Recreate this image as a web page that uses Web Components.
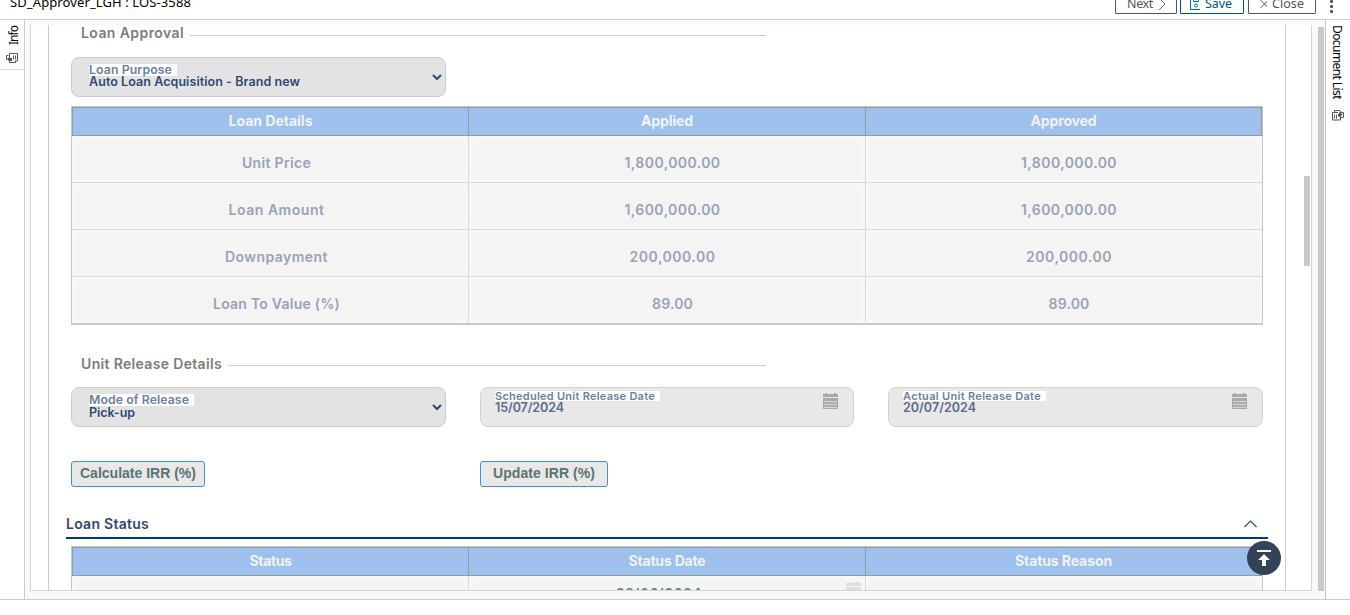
<!DOCTYPE html>
<html lang="en"><head><meta charset="utf-8"><title>Loan</title>
<style>html,body{margin:0;height:100%;overflow:hidden;background:#fff}</style></head><body>
<loan-app></loan-app>
<script>
const define=(name,html,setup)=>customElements.define(name,class extends HTMLElement{
  connectedCallback(){
    if(this.shadowRoot)return;
    const a=k=>this.getAttribute(k)||'';
    this.attachShadow({mode:'open'}).innerHTML=typeof html==='function'?html(a):html;
    if(setup)setup(this);
  }
});

/* A label whose letter-spacing is adjusted to a requested width. */
define('fit-text','<style>:host{display:block;white-space:nowrap;width:max-content}span{display:inline-block}</style><span><slot></slot></span>',el=>{
  const s=el.shadowRoot.querySelector('span'),w=+el.getAttribute('w'),n=el.textContent.length;
  if(w)s.style.letterSpacing=((w-s.getBoundingClientRect().width)/n)+'px';
});

define('calendar-icon','<style>:host{display:block;width:15px;height:16px}svg{display:block}</style><svg width="15" height="16" shape-rendering="crispEdges"><path d="M0 1h2V0h2v1h7V0h2v1h2v3H0zM0 5h15v11H0z" fill="#a8a8a8"/><path d="M1 8.5h13M1 11.5h13M1 14.5h13" stroke="#ddd" stroke-dasharray="2 1"/><path d="M3.5 8v7M6.5 8v7M9.5 8v7M12.5 8v7" stroke="#cdcdcd" stroke-dasharray="1 1"/></svg>');

define('tool-button',a=>`<style>:host{display:flex;box-sizing:border-box;height:17px;border:1px solid #555;border-radius:1px;color:#555;font:12.5px/17px "Noto Sans",sans-serif;padding:0 11px;gap:5px;align-items:center;width:${a('width')}px}:host([primary]){border-color:#00508c;color:#00508c;padding-left:9px}svg{flex:none}</style><slot></slot>`);

define('top-bar',`<style>:host{display:flex;height:19px;border-bottom:1px solid #ccc;overflow:hidden;justify-content:space-between;align-items:flex-start;font:13px/18px "Noto Sans",sans-serif;color:#000}
.title{margin:-7px 0 0 10px}.actions{display:flex;gap:3px;margin-top:-3px}.close{margin-left:1px}.dots{display:flex;flex-direction:column;gap:2px;margin:3px 17px 0 11px}.dots i{width:3px;height:3px;background:#555;border-radius:1px}fit-text{line-height:18px;margin-top:-4px}.actions svg{margin-top:-3px}</style>
<fit-text class="title" w="181">SD_Approver_LGH : LOS-3588</fit-text>
<div class="actions"><tool-button width="62"><fit-text w="26">Next</fit-text><svg width="9" height="13" fill="none" stroke="#666"><path d="M1 0l6 6-6 6"/></svg></tool-button>
<tool-button primary width="64"><svg width="12" height="12" fill="none" stroke="#0070c0" stroke-width="1"><path d="M.5 0v11.500h11V0M3.500 0v3.500h5V0"/><circle cx="6" cy="7.500" r="1.500"/></svg><fit-text w="27">Save</fit-text></tool-button>
<tool-button class="close" width="68"><svg width="9" height="12" fill="none" stroke="#555"><path d="M.5 2l8 8M8.5 2l-8 8"/></svg><fit-text w="32">Close</fit-text></tool-button>
<div class="dots"><i></i><i></i><i></i></div></div>`);

const docs={
left:`<svg width="12" height="10" fill="none" stroke="#555"><path d="M3.500 6V.5h8v7.500h-2.500M2.500 2.500h-2v4h1M9.500 8v1.500h-6.500M7.500 2.500v4M9.500 2.500v4"/><path d="M1 6l3-2.500V5h2v3H4v1.500z" fill="#555" stroke="none"/></svg>`,
right:`<svg width="12" height="11" fill="none" stroke="#555"><path d="M2.500 2V.5h5l2 2M6 2.500H.5v7.500h8V8M2.500 4.500v4M4.500 4.500v4M9.500 2.500h2v5H8"/><path d="M6 4.500l2-2.500h1.500v2h1l-2.500 3.500-2-1.500z" fill="#555" stroke="none"/></svg>`};
define('side-tab',a=>`<style>:host{display:flex;box-sizing:border-box;flex-direction:column;align-items:center;width:25px;background:#fff;font:12px/16px "Noto Sans",sans-serif;color:#000;border-right:1px solid #ccc}
:host([side=right]){border:0;border-left:1px solid #c4c4c4}
.tab{box-sizing:border-box;width:100%;height:50px;border-bottom:1px solid #ddd;display:flex;flex-direction:column;align-items:center;padding-top:6px;gap:8px}
:host([side=right]) .tab{height:auto;border:0;gap:11px;padding:5px 1px 0 0}
.v{writing-mode:vertical-rl;display:block;margin-left:4px}:host([side=right]) .v{margin:0 2px 0 0}:host([side=left]) .v{transform:rotate(180deg)}svg{display:block}</style><div class="tab"><span class="v"><slot></slot></span>${docs[a('side')]}</div>`,
el=>{const v=el.shadowRoot.querySelector('.v'),w=+el.getAttribute('length');v.style.letterSpacing=((w-v.getBoundingClientRect().height)/el.textContent.length)+'px';v.style.height=w+'px'});

define('section-rule',`<style>:host{display:flex;align-items:center;width:685px;height:20px;gap:6px;margin-left:10px;font:600 14px/20px Inter,sans-serif;color:#7c7c7c}i{flex:1;height:1px;background:#ccc;margin-top:3px}</style><slot></slot><i></i>`);

define('form-field',a=>`<style>:host{display:block;box-sizing:border-box;height:40px;border:1px solid #ccc;border-radius:8px;background:#e3e3e3;font-family:Inter,sans-serif;font-weight:600;color:#2f4a75}
:host([date]){background:#e8e8e8;border-color:#d2d2d2;color:#5a6a8a}
.row{display:flex;justify-content:space-between;height:100%}.copy{padding:6px 0 0 17px}.label{background:#fff;color:#6c7f9e;font-size:12.3px;line-height:12px;height:12px;padding-right:5px}.value{font-size:12.5px;line-height:13px}
:host(.purpose) .value{line-height:12px}
:host([date]) .copy{padding:3px 0 0 14px}:host([date]) .label{font-size:11px;line-height:10px;height:10px}:host([date]) .value{line-height:12px}:host([date]) .value{margin-top:1px}
svg{display:block;margin:16px 3px 0}calendar-icon{margin:5px 15px 0}</style>
<div class="row"><div class="copy"><fit-text class="label" w="${a('lw')}">${a('label')}</fit-text><fit-text class="value" w="${a('vw')}">${a('value')}</fit-text></div>
${a('date')?'<calendar-icon></calendar-icon>':'<svg width="10" height="7" fill="none" stroke="#2f4a75" stroke-width="2"><path d="M1 1l4 4 4-4"/></svg>'}</div>`);

define('data-table',a=>{
 const heads=a('heads').split('|').map(x=>x.split(':')),rows=a('rows').split(';').map(r=>r.split('|').map(x=>x.split(':')));
 return `<style>:host{display:block;box-sizing:border-box;border:1px solid #c6c6c6;width:1192px}
.head,.row{display:grid;grid-template-columns:397px 397px 396px;font-family:Inter,sans-serif;font-weight:700;font-size:14px;line-height:16px}
.head{box-sizing:border-box;height:29px;background:#9dc0ed;border:1px solid #929aa5;color:#f1f2f4;grid-template-columns:396px 397px 395px}
.head div{display:flex;justify-content:center;align-items:center;border-right:1px solid #929aa5}.head div:last-child,.cell:last-child{border-right:0}
.row{height:47px;color:#98a3b8;font-weight:600;background:#f7f7f7}.cell{display:flex;box-sizing:border-box;border-right:1px solid #dadada;border-bottom:1px solid #dadada;padding:3px 3px 2px}
.row:last-child .cell{border-bottom-color:#ccc}.pill{flex:1;display:flex;justify-content:center;align-items:center;background:#f4f4f4;border-radius:8px;padding:7px 0 0 11px}.cell:first-child .pill{padding-left:13px}.cell:last-child .pill{padding-left:10px}
.head fit-text{margin-top:-1px}.date{color:#627b76}.date .pill{position:relative;align-items:flex-start;padding:5px 15px 0 0}.date fit-text{font:600 13.5px/17px "Liberation Sans"}.date calendar-icon{position:absolute;right:1px;top:3px;opacity:.28}</style>
<div class="head">${heads.map(h=>`<div><fit-text w="${h[1]}">${h[0]}</fit-text></div>`).join('')}</div>
${rows.map(r=>`<div class="row">${r.map(c=>`<div class="cell ${c[2]||''}"><div class="pill">${c[0]?`<fit-text w="${c[1]}">${c[0]}</fit-text>`:''}${c[2]?'<calendar-icon></calendar-icon>':''}</div></div>`).join('')}</div>`).join('')}`});

define('action-button',a=>`<style>:host{display:flex;box-sizing:border-box;justify-content:center;align-items:center;width:${a('width')}px;height:26px;border:1px solid #3c93d6;border-radius:3px;background:#e8e8e8;color:#5b7470;font:bold 14px/22px "Liberation Sans",sans-serif;padding-bottom:2px}</style><slot></slot>`);

define('loan-form',`<style>:host{display:block;box-sizing:border-box;width:1238px;margin-left:17px;height:565px;border:solid #ccc;border-width:0 1px;padding-left:22px;overflow:hidden}
.purpose{width:375px;margin:13px 0 9px}.fields{display:grid;grid-template-columns:375px 374px 375px;column-gap:34px;margin-top:13px;justify-content:start}.second{margin-top:29px}.buttons{display:grid;grid-template-columns:375px 374px;column-gap:34px;margin-top:34px}
.status{display:flex;justify-content:space-between;align-items:center;box-sizing:border-box;width:1202px;height:33px;border-bottom:2px solid #003a78;margin:19px 0 7px -5px;padding:4px 11px 0 0;font:600 14px/20px Inter,sans-serif;color:#34476b}svg{display:block}.first{height:20px;margin-top:-1px}.lift{margin-top:-2px}</style>
<section-rule class="first"><fit-text class="lift" w="103">Loan Approval</fit-text></section-rule>
<form-field class="purpose" label="Loan Purpose" value="Auto Loan Acquisition - Brand new" lw="83" vw="211"></form-field>
<data-table heads="Loan Details:84|Applied:52|Approved:66" rows="Unit Price:69|1,800,000.00:96|1,800,000.00:96;Loan Amount:96|1,600,000.00:96|1,600,000.00:96;Downpayment:103|200,000.00:86|200,000.00:86;Loan To Value (%):127|89.00:41|89.00:41"></data-table>
<section-rule class="second"><fit-text w="141">Unit Release Details</fit-text></section-rule>
<div class="fields"><form-field label="Mode of Release" value="Pick-up" lw="100" vw="46"></form-field><form-field date="1" label="Scheduled Unit Release Date" value="15/07/2024" lw="160" vw="69"></form-field><form-field date="1" label="Actual Unit Release Date" value="20/07/2024" lw="138" vw="73"></form-field></div>
<div class="buttons"><action-button width="134"><fit-text w="116">Calculate IRR (%)</fit-text></action-button><action-button width="128"><fit-text w="102">Update IRR (%)</fit-text></action-button></div>
<div class="status"><fit-text w="83">Loan Status</fit-text><svg width="13" height="8" fill="none" stroke="#34476b" stroke-width="1.1"><path d="M.5 7L6.500 1l6 6"/></svg></div>
<data-table heads="Status:42|Status Date:77|Status Reason:97" rows="|28/06/2024:86:date|"></data-table>`);

define('loan-app',`<style>:host{display:block;height:615px;background:#fff;overflow:hidden}
.body{display:grid;grid-template-columns:25px 1300px 25px;height:579px;border-bottom:1px solid #ccc}
.work{display:grid;grid-template-columns:1282px 6px;column-gap:6px;background:#f8f9fb;padding:5px 0 8px 5px}
.panel{position:relative;box-sizing:border-box;height:566px;border:solid #d4d4d4;border-width:0 1px 1px;background:#fff;overflow:hidden}
.track{height:564px;margin-top:2px;background:#c8c8c8}.thumb{position:absolute;right:1px;top:151px;width:6px;height:90px;background:#c8c8c8}
.up{position:absolute;left:1216px;top:516px}</style>
<top-bar></top-bar><div class="body"><side-tab side="left" length="19">Info</side-tab><div class="work"><div class="panel"><loan-form></loan-form><div class="thumb"></div><svg class="up" width="34" height="34"><circle cx="17" cy="17" r="17" fill="#334257"/><path d="M10 9h14v2H10zM17 13l6 6h-4v6h-4v-6h-4z" fill="#fff"/></svg></div><div class="track"></div></div><side-tab side="right" length="74">Document List</side-tab></div>`);
</script></body></html>
